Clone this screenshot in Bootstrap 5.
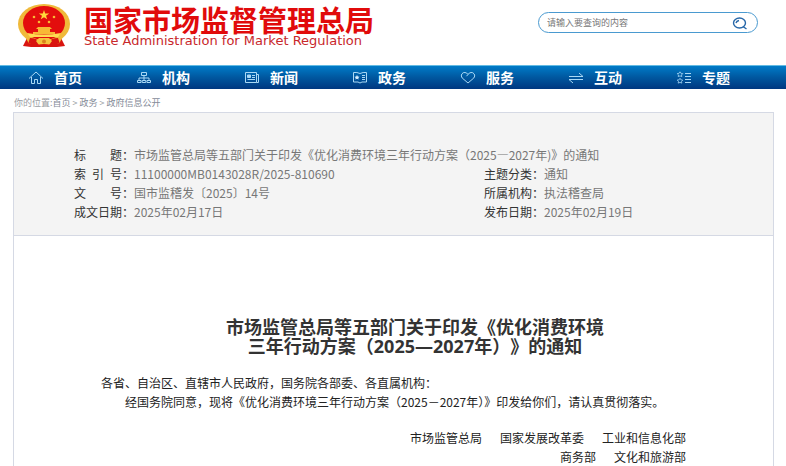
<!DOCTYPE html>
<html lang="zh-CN">
<head>
<meta charset="utf-8">
<meta name="viewport" content="width=device-width, initial-scale=1">
<title>国家市场监督管理总局</title>
<link href="https://cdn.jsdelivr.net/npm/bootstrap@5.3.0/dist/css/bootstrap.min.css" rel="stylesheet">
<style>
body{font-family:"Noto Sans CJK SC",sans-serif;font-size:12px;line-height:19px;color:#222;background:#fff}
.site-head{height:65px;padding:4px 28px 0 17px}
.emblem{width:54px;height:45px}
.brand{margin-left:13px;color:#e10b0b;text-decoration:none}
.brand-cn{font-size:29px;font-weight:700;line-height:30px}
.brand-en{font-family:"DejaVu Sans",sans-serif;font-size:13px;line-height:13px;color:#c8282b}
.search{width:220px;height:21px;margin-top:8px;border:1px solid #4a9ad0;border-radius:11px;padding:0 9px 0 8px}
.search input{font-size:9px;line-height:18px;color:#666;min-width:0}
.search input::placeholder{color:#777;opacity:1}
.search svg{width:16px;height:14px}
.mainnav{height:24px;padding:0 15px;border-top:1px solid #63bbe3;background:linear-gradient(#007bc8,#00579f 50%,#003780)}
.mainnav a{padding-left:13px;gap:10px;color:#fff;font-size:14px;font-weight:700;line-height:23px;text-decoration:none}
.mainnav svg{width:16px;height:13px;fill:none;stroke:#a9d8f5;stroke-width:1}
.crumbs{padding:4px 14px 0;font-size:9px;color:#9a9da3}
.crumbs a{color:#858b98;text-decoration:none}
.doc{margin:0 12px 0 13px;border:1px solid #d5d9e4;border-bottom:0}
.meta-box{padding:32px 60px 14px;background:#f4f4f4;border-bottom:1px solid #d5d9e4;color:#777}
.meta-box dt{font-weight:400;color:#333;width:60px}
.meta-box .k{width:48px}
.pair{flex:0 0 410px}
.article{padding:82px 44px 0 87px}
.article h1{font-family:"Noto Sans","Noto Sans CJK SC",sans-serif;font-size:18px;line-height:19px;font-weight:700;color:#333;margin-bottom:17px;text-spacing-trim:space-all}
.article p{margin:0}
.article .indent{text-indent:2em}
.sign{margin-top:17px;padding-right:43px}
.sign div{gap:18px}
</style>
<script src="https://cdn.jsdelivr.net/npm/bootstrap@5.3.0/dist/js/bootstrap.bundle.min.js"></script>
</head>
<body>
<header class="site-head d-flex align-items-start">
  <svg class="emblem flex-shrink-0" viewBox="0 0 54 45" aria-hidden="true">
    <path d="M12 30 6 42l8 1h26l8-1-6-12z" fill="#d9140f"/>
    <ellipse cx="27" cy="20" rx="26" ry="20" fill="#f0b93a"/>
    <path d="M9 34h36l-3 6-7-2-2-3H21l-2 3-7 2z" fill="#f0b93a"/>
    <ellipse cx="27" cy="19" rx="21" ry="17" fill="#e30d0d"/>
    <path d="m27 6 1.200 3.500h4l-3.200 2.200 1.200 3.500-3.200-2-3.200 2 1.200-3.500-3.200-2.200h4z" fill="#ffd83b"/>
    <g fill="#f8b935"><circle cx="17" cy="13" r="1.300"/><circle cx="37" cy="13" r="1.300"/><circle cx="22" cy="18" r="1.300"/><circle cx="32" cy="18" r="1.300"/><path d="M21 23h12l2 2h-2v3h5v2H16v-2h5v-3h-2z"/></g>
    <path d="M10 29q17 3 34 0l-3 4H13z" fill="#ffdc52"/>
    <path d="M13 34q7 0 9 4l-4 5q-2-4-7-3zM41 34q-7 0-9 4l4 5q2-4 7-3z" fill="#d9140f"/>
    <path d="M22 34h10l3 3-3 4H22l-3-4z" fill="#f5c33d"/><circle cx="27" cy="37.500" r="2" fill="#d9821b"/>
    <path d="M20 41q7-2 14 0l2 2H18z" fill="#d9140f"/>
  </svg>
  <a class="brand d-flex flex-column text-nowrap" href="#"><span class="brand-cn">国家市场监督管理总局</span><span class="brand-en">State Administration for Market Regulation</span></a>
  <form class="search d-flex align-items-center ms-auto" role="search">
    <input class="border-0 bg-transparent p-0 flex-grow-1" type="text" placeholder="请输入要查询的内容" aria-label="请输入要查询的内容">
    <button class="btn p-0 border-0 d-flex" type="button" aria-label="搜索"><svg viewBox="0 0 16 14" fill="none" stroke="#2767a8" stroke-width="1.400"><ellipse cx="7.500" cy="7" rx="6" ry="5"/><path d="m11 10.500 3.500 2.500M4 7q.5-2 3-2.500" /></svg></button>
  </form>
</header>
<nav class="mainnav row g-0 flex-nowrap" aria-label="主导航">
  <a class="col d-flex align-items-center" href="#"><svg viewBox="0 0 16 13"><path d="M1 7.500 8 1l7 6.500M3.500 6v6.500h3v-4h3v4h3V6"/></svg>首页</a>
  <a class="col d-flex align-items-center" href="#"><svg viewBox="0 0 16 13"><path d="M5.500 1.500h5v3h-5zM8 4.500v5M3 9.500v-2.500h10v2.500M1.500 9.500h3.500v2H1.500zM6.200 9.500h3.600v2H6.200zM11 9.500h3.500v2H11z"/></svg>机构</a>
  <a class="col d-flex align-items-center" href="#"><svg viewBox="0 0 16 13"><path d="M1.500 1.500h11v10h-11zM12.500 3.500h2v8h-2M8 4.500h3M8 6.500h3M3.500 8.500H11"/><path d="M3.500 4h3v2.500h-3z" fill="#a9d8f5"/></svg>新闻</a>
  <a class="col d-flex align-items-center" href="#"><svg viewBox="0 0 16 13"><path d="M1.500 1.500Q5 1 8 2.500q3-1.500 6.500-1v9.500H10l-2 1-2-1H1.500zM10 4.500h3M10 6.500h3M10 8.500h3"/><path d="m5 4 .8 1.500 1.700.2-1.200 1.200.3 1.600L5 7.700l-1.600.8.3-1.600-1.200-1.200 1.700-.2z" fill="#d9f0ff" stroke="none"/></svg>政务</a>
  <a class="col d-flex align-items-center" href="#"><svg viewBox="0 0 16 13"><path d="M8 12 2.200 7Q.5 5 1.800 3 3 1.200 5 1.500 7 1.700 8 3.500 9 1.700 11 1.500q2-.3 3.200 1.500 1.300 2-.4 4zM8 3.500 6.500 5.200"/></svg>服务</a>
  <a class="col d-flex align-items-center" href="#"><svg viewBox="0 0 16 13"><path d="M1 5.500h14L11 2M15 8.500H1l4 3.500"/></svg>互动</a>
  <a class="col d-flex align-items-center" href="#"><svg viewBox="0 0 16 13"><path d="M9 2.500h6M9 5.500h6M9 8.500h6M9 11.500h6" /><path d="m4 .8.9 1.500 1.900.3-1.300 1.300.3 1.700L4 4.900l-1.800.7.3-1.700L1.200 2.600l1.900-.3zM4 7.300l.9 1.500 1.900.3-1.300 1.300.3 1.700-1.800-.7-1.800.7.3-1.700-1.300-1.300 1.900-.3z" stroke-width=".8"/></svg>专题</a>
</nav>
<div class="crumbs">你的位置:<a href="#">首页</a> &gt; <a href="#">政务</a> &gt; <a href="#">政府信息公开</a></div>
<main class="doc">
  <section class="meta-box">
    <dl class="d-flex m-0"><dt class="d-flex"><span class="k d-flex justify-content-between"><span>标</span><span>题</span></span>：</dt><dd class="m-0">市场监管总局等五部门关于印发《优化消费环境三年行动方案（2025—2027年)》的通知</dd></dl>
    <dl class="d-flex m-0"><div class="pair d-flex"><dt class="d-flex"><span class="k d-flex justify-content-between"><span>索</span><span>引</span><span>号</span></span>：</dt><dd class="m-0">11100000MB0143028R/2025-810690</dd></div><div class="d-flex"><dt>主题分类：</dt><dd class="m-0">通知</dd></div></dl>
    <dl class="d-flex m-0"><div class="pair d-flex"><dt class="d-flex"><span class="k d-flex justify-content-between"><span>文</span><span>号</span></span>：</dt><dd class="m-0">国市监稽发〔2025〕14号</dd></div><div class="d-flex"><dt>所属机构：</dt><dd class="m-0">执法稽查局</dd></div></dl>
    <dl class="d-flex m-0"><div class="pair d-flex"><dt>成文日期：</dt><dd class="m-0">2025年02月17日</dd></div><div class="d-flex"><dt>发布日期：</dt><dd class="m-0">2025年02月19日</dd></div></dl>
  </section>
  <article class="article">
    <h1 class="text-center">市场监管总局等五部门关于印发《优化消费环境<br>三年行动方案（2025—2027年）》的通知</h1>
    <p>各省、自治区、直辖市人民政府，国务院各部委、各直属机构：</p>
    <p class="indent">经国务院同意，现将《优化消费环境三年行动方案（2025－2027年）》印发给你们，请认真贯彻落实。</p>
    <div class="sign">
      <div class="d-flex justify-content-end"><span>市场监管总局</span><span>国家发展改革委</span><span>工业和信息化部</span></div>
      <div class="d-flex justify-content-end"><span>商务部</span><span>文化和旅游部</span></div>
    </div>
  </article>
</main>
</body>
</html>
